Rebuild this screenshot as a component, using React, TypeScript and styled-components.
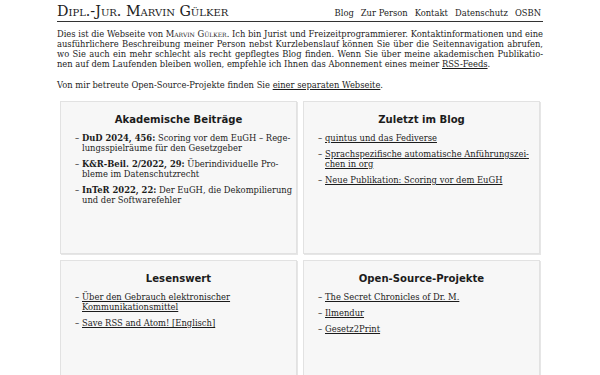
import React from "react";
import styled, { createGlobalStyle } from "styled-components";

const GlobalStyle = createGlobalStyle`
	body {
		margin: 0;
		background: #ffffff;
		color: #1c1c1c;
		font-family: "DejaVu Serif", serif;
		font-size: 8.35px;
		line-height: 10px;
	}
`;

const Page = styled.div`
	width: 486px;
	margin: 0 auto;
	padding-top: 3px;
`;

const Header = styled.header`
	display: flex;
	justify-content: space-between;
	align-items: baseline;
	border-bottom: 1px solid #333;
	padding-bottom: 1px;
`;

const Title = styled.h1`
	margin: 0;
	font-size: 14.3px;
	line-height: 17px;
	font-weight: normal;
	font-variant: small-caps;
`;

const Nav = styled.nav`
	display: flex;
	gap: 7px;
	font-size: 8.4px;
	padding-right: 2px;
`;

const NavLink = styled.a`
	color: inherit;
	text-decoration: none;
`;

const Text = styled.p<{ $gap: number }>`
	margin: ${(p) => p.$gap}px 0 0;
	text-align: justify;
	hyphens: manual;
`;

const SmallCaps = styled.span`
	font-variant: small-caps;
`;

const Link = styled.a`
	color: inherit;
	text-decoration: underline;
	text-underline-offset: 1px;
`;

const Grid = styled.div`
	display: grid;
	grid-template-columns: 1fr 1fr;
	margin-top: 8px;
`;

const Card = styled.section`
	margin: 3px;
	height: 153px;
	background: #f7f7f7;
	border: 1px solid #e2e2e2;
	box-shadow: 1px 1px 0 #e6e6e6;
	padding: 12px 3px 0;
	box-sizing: border-box;
`;

const CardTitle = styled.h2`
	margin: 0 0 7px;
	text-align: center;
	font-family: "DejaVu Sans", sans-serif;
	font-weight: bold;
	font-size: 10.1px;
	line-height: 12px;
`;

const List = styled.ul`
	margin: 0;
	padding: 0 0 0 11px;
	list-style: none;
	font-size: 8.4px;
`;

const Item = styled.li`
	position: relative;
	padding-left: 7px;
	margin-bottom: 6px;
	hyphens: manual;

	&::before {
		content: "–";
		position: absolute;
		left: 0;
	}
`;

const Source = styled.b`
	font-weight: bold;
`;

export default function App() {
	return (
		<>
			<GlobalStyle />
			<Page>
				<Header>
					<Title>Dipl.-Jur. Marvin Gülker</Title>
					<Nav>
						<NavLink>Blog</NavLink>
						<NavLink>Zur Person</NavLink>
						<NavLink>Kontakt</NavLink>
						<NavLink>Datenschutz</NavLink>
						<NavLink>OSBN</NavLink>
					</Nav>
				</Header>
				<Text $gap={7}>
					Dies ist die Webseite von <SmallCaps>Marvin Gülker</SmallCaps>. Ich bin Jurist und
					Freizeitprogrammierer. Kontaktinformationen und eine ausführlichere Beschreibung meiner
					Person nebst Kurzlebenslauf können Sie über die Seitennavigation abrufen, wo Sie auch ein
					mehr schlecht als recht gepflegtes Blog finden. Wenn Sie über meine akademischen
					Publikatio{"\u00AD"}nen auf dem Laufenden bleiben wollen, empfehle ich Ihnen das Abonnement
					eines meiner <Link>RSS-Feeds</Link>.
				</Text>
				<Text $gap={11}>
					Von mir betreute Open-Source-Projekte finden Sie <Link>einer separaten Webseite</Link>.
				</Text>
				<Grid>
					<Card>
						<CardTitle>Akademische Beiträge</CardTitle>
						<List>
							<Item>
								<Source>DuD 2024, 456:</Source> Scoring vor dem EuGH – Rege{"\u00AD"}lungsspielräume
								für den Gesetzgeber
							</Item>
							<Item>
								<Source>K&amp;R-Beil. 2/2022, 29:</Source> Überindividuelle Pro{"\u00AD"}bleme im
								Datenschutzrecht
							</Item>
							<Item>
								<Source>InTeR 2022, 22:</Source> Der EuGH, die Dekompilierung und der Softwarefehler
							</Item>
						</List>
					</Card>
					<Card>
						<CardTitle>Zuletzt im Blog</CardTitle>
						<List>
							<Item>
								<Link>quintus und das Fediverse</Link>
							</Item>
							<Item>
								<Link>Sprachspezifische automatische Anführungszei{"\u00AD"}chen in org</Link>
							</Item>
							<Item>
								<Link>Neue Publikation: Scoring vor dem EuGH</Link>
							</Item>
						</List>
					</Card>
					<Card>
						<CardTitle>Lesenswert</CardTitle>
						<List>
							<Item>
								<Link>Über den Gebrauch elektronischer Kommunikationsmittel</Link>
							</Item>
							<Item>
								<Link>Save RSS and Atom! [Englisch]</Link>
							</Item>
						</List>
					</Card>
					<Card>
						<CardTitle>Open-Source-Projekte</CardTitle>
						<List>
							<Item>
								<Link>The Secret Chronicles of Dr. M.</Link>
							</Item>
							<Item>
								<Link>Ilmendur</Link>
							</Item>
							<Item>
								<Link>Gesetz2Print</Link>
							</Item>
						</List>
					</Card>
				</Grid>
			</Page>
		</>
	);
}
